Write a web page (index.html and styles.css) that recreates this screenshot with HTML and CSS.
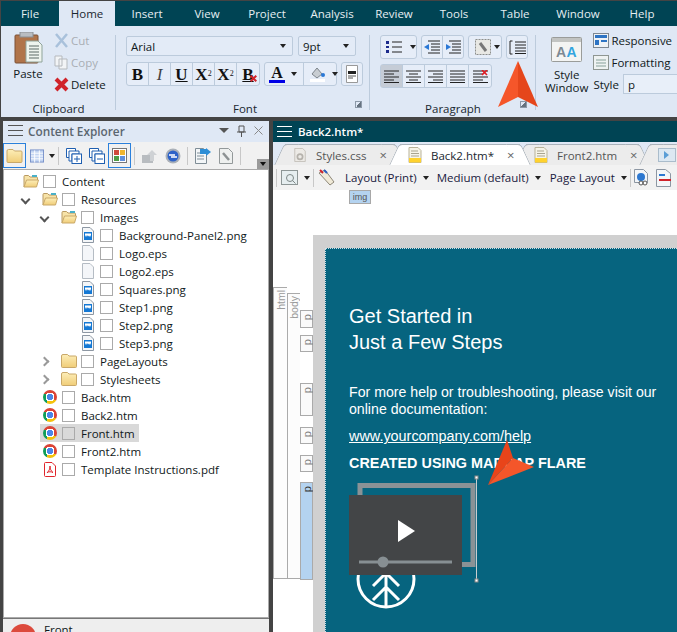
FILE: index.html
```html
<!DOCTYPE html>
<html lang="en">
<head>
<meta charset="utf-8">
<title>MadCap Flare</title>
<link rel="stylesheet" href="styles.css">
</head>
<body>
<svg class="defs" width="0" height="0">
  <defs>
    <linearGradient id="fold" x1="0" y1="0" x2="0" y2="1"><stop offset="0" stop-color="#fdeeb8"/><stop offset="1" stop-color="#f0cd78"/></linearGradient>
    <symbol id="folder" viewBox="0 0 16 14"><path d="M.5 3V12.500a1 1 0 0 0 1 1h13a1 1 0 0 0 1-1V3a1 1 0 0 0-1-1H8L6.500.5H2a1.500 1.500 0 0 0-1.500 1.500z" fill="url(#fold)" stroke="#c9a869"/></symbol>
    <symbol id="folderopen" viewBox="0 0 16 14"><path d="M1 13V2.500A1 1 0 0 1 2 1.500h3.500L7 3h6.500a1 1 0 0 1 1 1v2" fill="#f7e3a8" stroke="#b99a62"/><rect x="9" y="1" width="5" height="2" fill="#49b0c8"/><path d="M1 13l2.500-7h12L13.500 13z" fill="url(#fold)" stroke="#c9a869"/></symbol>
    <symbol id="imgfile" viewBox="0 0 12 16"><path d="M.5.500H8L11.500 4V15.500H.5z" fill="#f4f6f8" stroke="#8d97a3"/><rect x="2" y="5" width="8" height="8" fill="#1478d4"/><path d="M3 6.500h6v1.500l-1 2-1-1.500L6 9.500 5 8 4 10 3 8z" fill="#fff"/></symbol>
    <symbol id="blankfile" viewBox="0 0 12 16"><path d="M.5.500H8L11.500 4V15.500H.5z" fill="#f4f6f9" stroke="#b5bcc4"/></symbol>
    <symbol id="docy" viewBox="0 0 14 16"><path d="M1 .5H10L13 3.500V15.500H1z" fill="#f6f4e8" stroke="#b9b39a"/><path d="M3 4h7M3 6.500h8M3 9h8" stroke="#a9a48f"/><rect x="1" y="11" width="12" height="4.500" fill="#ffd22e"/></symbol>
  </defs>
</svg>
<div class="app">
  <nav class="menu">
    <span>File</span><span class="on">Home</span><span>Insert</span><span>View</span><span>Project</span><span>Analysis</span><span>Review</span><span>Tools</span><span>Table</span><span>Window</span><span>Help</span>
  </nav>

  <section class="ribbon">
    <div class="grp g-clip">
      <div class="grp-body clip">
        <div class="paste">
          <svg width="29" height="32" viewBox="0 0 29 32"><rect x="1" y="3" width="23" height="28" rx="1" fill="#b0744a" stroke="#7b5136"/><rect x="6" y="0" width="13" height="5" fill="#b9bdc2" stroke="#8b8f94"/><path d="M12 9h12l4 4v17H12z" fill="#eef4ee" stroke="#8fa39a"/><path d="M15 14h10M15 17h10M15 20h10M15 23h10M15 26h10" stroke="#5c6b66"/></svg>
          <span>Paste</span>
        </div>
        <div class="clip-list">
          <div class="cl dis"><svg width="15" height="15" viewBox="0 0 15 15"><path d="M2 1l11 13M13 1L2 14" stroke="#a9c1db" stroke-width="2.500"/></svg>Cut</div>
          <div class="cl dis"><svg width="15" height="15" viewBox="0 0 15 15"><path d="M1 1h7v10H1zM5 4h8v10H5z" fill="#f2f4f6" stroke="#b5b9bd"/></svg>Copy</div>
          <div class="cl"><svg width="15" height="15" viewBox="0 0 15 15"><path d="M2 2l11 11M13 2L2 13" stroke="#d0232a" stroke-width="4"/></svg>Delete</div>
        </div>
      </div>
      <div class="grp-label">Clipboard</div>
    </div>

    <div class="grp g-font">
      <div class="grp-body fontbody">
        <div class="frow r1">
          <div class="sel s-font">Arial<i class="caret"></i></div>
          <div class="sel s-size">9pt<i class="caret"></i></div>
        </div>
        <div class="frow r2">
          <div class="btns">
            <b class="b tb serif">B</b><b class="b serif it">I</b><b class="b serif un">U</b><b class="b tb serif">X<sup>2</sup></b><b class="b tb serif">X<sub>2</sub></b><b class="b tb serif un x">B</b>
          </div>
          <div class="btns colors">
            <span class="c-a"><b class="serif">A</b><i class="bar"></i></span><i class="caret"></i>
            <span class="c-b"><svg width="17" height="16" viewBox="0 0 17 16"><path d="M3 8l5-6 5 6-5 4z" fill="#c8cdd2" stroke="#7d858c"/><circle cx="14" cy="9" r="2" fill="#2a78d6"/><rect x="1" y="13" width="15" height="3" fill="#fff"/></svg></span><i class="caret"></i>
          </div>
          <div class="btns solo"><svg width="12" height="18" viewBox="0 0 12 18"><path d="M.5.500h11v17H.5z" fill="#fff" stroke="#999"/><rect x="2" y="6" width="8" height="3" fill="#222"/><path d="M2 11h8" stroke="#555"/><path d="M2 13h5" stroke="#555"/></svg></div>
        </div>
      </div>
      <div class="grp-label">Font<i class="launch"></i></div>
    </div>

    <div class="grp g-para">
      <div class="grp-body parabody">
        <div class="prow p1">
          <div class="btns pb list"><svg width="16" height="14" viewBox="0 0 16 14"><path d="M0 1h3v3H0zM0 6h3v2H0zM0 10h3v3H0z" fill="#1b2a8c"/><path d="M6 2h10M6 7h10M6 12h10" stroke="#222"/></svg><i class="caret"></i></div>
          <div class="btns pb indent"><span><svg width="16" height="14" viewBox="0 0 16 14"><path d="M4 1h12M7 4h9M7 7h9M7 10h9M4 13h12" stroke="#222"/><path d="M0 7l5-3v6z" fill="#2a78d6"/></svg></span><span><svg width="16" height="14" viewBox="0 0 16 14"><path d="M4 1h12M7 4h9M7 7h9M7 10h9M4 13h12" stroke="#222"/><path d="M6 7L1 4v6z" fill="#2a78d6"/></svg></span></div>
          <div class="btns pb tool"><svg width="16" height="16" viewBox="0 0 16 16"><rect x=".5" y=".5" width="15" height="15" fill="#e8e8e4" stroke="#8c8f8c" stroke-dasharray="2 1"/><path d="M5 4l6 8" stroke="#777" stroke-width="3"/></svg><i class="caret"></i></div>
          <div class="btns pb bracket"><svg width="17" height="15" viewBox="0 0 17 15"><path d="M3.500 1H1v13h2.500" fill="none" stroke="#222"/><path d="M6 2h11M6 5h11M6 8h11M6 11h11M6 13.500h11" stroke="#222"/></svg></div>
        </div>
        <div class="prow p2">
          <div class="btns align">
            <span class="act"><svg width="15" height="13" viewBox="0 0 15 13"><path d="M0 1h15M0 4h10M0 7h15M0 10h10M0 12.500h15" stroke="#222"/></svg></span>
            <span><svg width="15" height="13" viewBox="0 0 15 13"><path d="M0 1h15M3 4h9M0 7h15M3 10h9M0 12.500h15" stroke="#222"/></svg></span>
            <span><svg width="15" height="13" viewBox="0 0 15 13"><path d="M0 1h15M5 4h10M0 7h15M5 10h10M0 12.500h15" stroke="#222"/></svg></span>
            <span><svg width="15" height="13" viewBox="0 0 15 13"><path d="M0 1h15M0 4h15M0 7h15M0 10h15M0 12.500h15" stroke="#222"/></svg></span>
            <span><svg width="15" height="13" viewBox="0 0 15 13"><path d="M0 1h15M0 4h10M0 7h15M0 10h10M0 12.500h15" stroke="#222"/><path d="M9 0l5 5M14 0L9 5" stroke="#e01c24" stroke-width="1.600"/></svg></span>
          </div>
        </div>
      </div>
      <div class="grp-label">Paragraph<i class="launch"></i></div>
    </div>

    <div class="g-style">
      <div class="stylewin">
        <svg width="31" height="25" viewBox="0 0 31 25"><rect x=".5" y=".5" width="30" height="24" rx="1" fill="#f3f4f3" stroke="#9a9c9a"/><rect x="1" y="1" width="29" height="4" fill="#c2c4c2"/><text x="5" y="20" font-family="Liberation Sans, sans-serif" font-size="14" font-weight="700" fill="#7d8993">A</text><text x="15.500" y="20" font-family="Liberation Sans, sans-serif" font-size="14" font-weight="700" fill="#33a5df">A</text></svg>
        <span class="swl">Style</span>
        <span class="swl">Window</span>
      </div>
      <div class="stylelist">
        <div class="sl"><svg width="16" height="15" viewBox="0 0 16 15"><rect x=".5" y=".5" width="15" height="14" fill="#eef2f6" stroke="#7e8892"/><path d="M2 2h12v3H2zM2 7h4v5H2zM8 7h6v2H8z" fill="#2d74c4"/></svg>Responsive</div>
        <div class="sl"><svg width="16" height="15" viewBox="0 0 16 15"><rect x=".5" y=".5" width="15" height="14" fill="#eef2f2" stroke="#8e9692"/><path d="M3 5h10M3 8h10M3 11h10" stroke="#87a19a"/></svg>Formatting</div>
        <div class="sl st">Style<div class="stylebox">p</div></div>
      </div>
    </div>
  </section>

  <main class="work">
    <aside class="explorer">
      <header class="ph">
        <span class="ham"><i></i><i></i><i></i></span>
        <strong>Content Explorer</strong>
        <span class="ph-ctl">
          <i class="caret big"></i>
          <svg width="9" height="12" viewBox="0 0 9 12"><path d="M2 1h5v6H2zM0 7h9M4.500 7v5" fill="none" stroke="#555"/></svg>
          <svg width="9" height="9" viewBox="0 0 9 9"><path d="M.5.500l8 8M8.500.500l-8 8" stroke="#888"/></svg>
        </span>
      </header>
      <div class="ptools">
        <span class="pt selb"><svg width="17" height="14"><use href="#folder"/></svg></span>
        <span class="pt w-table"><svg width="15" height="14" viewBox="0 0 15 14"><rect x=".5" y=".5" width="14" height="13" fill="#c3d5f2" stroke="#7690c8"/><path d="M1 4h13M1 7h13M1 10h13M5 1v13M10 1v13" stroke="#fff"/></svg><i class="caret"></i></span>
        <i class="vsep"></i>
        <span class="pt w-c"><svg width="16" height="16" viewBox="0 0 16 16"><path d="M.5.500h9v3h-6v6h-3z" fill="#fff" stroke="#1f5fb0"/><path d="M3 3h10v3H6v7H3z" fill="#fff" stroke="#1f5fb0"/><rect x="6" y="6" width="9.500" height="9.500" fill="#fff" stroke="#1f5fb0"/><path d="M8 11h6M11 8v6" stroke="#1f5fb0"/></svg></span>
        <span class="pt w-c"><svg width="16" height="16" viewBox="0 0 16 16"><path d="M.5.500h9v3h-6v6h-3z" fill="#fff" stroke="#1f5fb0"/><path d="M3 3h10v3H6v7H3z" fill="#fff" stroke="#1f5fb0"/><rect x="6" y="6" width="9.500" height="9.500" fill="#fff" stroke="#1f5fb0"/><path d="M8 11h6" stroke="#1f5fb0"/></svg></span>
        <span class="pt selb"><svg width="15" height="15" viewBox="0 0 15 15"><rect x=".5" y=".5" width="14" height="14" fill="#fff" stroke="#777"/><rect x="2" y="2" width="5" height="5" fill="#d04a3c"/><rect x="8" y="2" width="5" height="5" fill="#f0b52e"/><rect x="2" y="8" width="5" height="5" fill="#4f9d46"/><rect x="8" y="8" width="5" height="5" fill="#5f8fdc"/></svg></span>
        <i class="vsep"></i>
        <span class="pt w-c"><svg width="16" height="14" viewBox="0 0 16 14"><path d="M0 6h11v8H0z" fill="#b8bcc0"/><path d="M10 1l5 5h-3v6H8V6H5z" fill="#cfd2d5"/></svg></span>
        <span class="pt w-c"><svg width="16" height="16" viewBox="0 0 16 16"><circle cx="8" cy="8" r="7.500" fill="#aab0b8"/><circle cx="8" cy="8" r="5.500" fill="#2d62c8"/><path d="M4 7h6M12 9H6" stroke="#fff" stroke-width="1.500"/></svg></span>
        <i class="vsep"></i>
        <span class="pt w-c"><svg width="16" height="16" viewBox="0 0 16 16"><path d="M.5.500h8l3 3v12H.5z" fill="#f3f6f8" stroke="#7f8d96"/><path d="M2 5h7M2 8h7M2 11h7" stroke="#7f8d96"/><path d="M5 1h6V0l5 4-5 4V6H5z" fill="#2d8ed6"/></svg></span>
        <span class="pt w-c"><svg width="14" height="16" viewBox="0 0 14 16"><path d="M.5.500h9l4 4v11H.5z" fill="#eef0ef" stroke="#93999a"/><path d="M4 5l6 7" stroke="#8c9192" stroke-width="2.500"/></svg></span>
        <i class="vsep"></i>
        <span class="overflow"><i></i></span>
      </div>
      <div class="tree">
        <div class="row l0"><svg class="ic" width="16" height="14"><use href="#folderopen"/></svg><i class="cb"></i><span>Content</span></div>
        <div class="row l1"><i class="chev down"></i><svg class="ic" width="16" height="14"><use href="#folderopen"/></svg><i class="cb"></i><span>Resources</span></div>
        <div class="row l2"><i class="chev down"></i><svg class="ic" width="16" height="14"><use href="#folderopen"/></svg><i class="cb"></i><span>Images</span></div>
        <div class="row l3"><svg class="ic" width="12" height="16"><use href="#imgfile"/></svg><i class="cb"></i><span>Background-Panel2.png</span></div>
        <div class="row l3"><svg class="ic" width="12" height="16"><use href="#blankfile"/></svg><i class="cb"></i><span>Logo.eps</span></div>
        <div class="row l3"><svg class="ic" width="12" height="16"><use href="#blankfile"/></svg><i class="cb"></i><span>Logo2.eps</span></div>
        <div class="row l3"><svg class="ic" width="12" height="16"><use href="#imgfile"/></svg><i class="cb"></i><span>Squares.png</span></div>
        <div class="row l3"><svg class="ic" width="12" height="16"><use href="#imgfile"/></svg><i class="cb"></i><span>Step1.png</span></div>
        <div class="row l3"><svg class="ic" width="12" height="16"><use href="#imgfile"/></svg><i class="cb"></i><span>Step2.png</span></div>
        <div class="row l3"><svg class="ic" width="12" height="16"><use href="#imgfile"/></svg><i class="cb"></i><span>Step3.png</span></div>
        <div class="row l2"><i class="chev"></i><svg class="ic" width="16" height="14"><use href="#folder"/></svg><i class="cb"></i><span>PageLayouts</span></div>
        <div class="row l2"><i class="chev"></i><svg class="ic" width="16" height="14"><use href="#folder"/></svg><i class="cb"></i><span>Stylesheets</span></div>
        <div class="row l1"><i class="chrome ic"></i><i class="cb"></i><span>Back.htm</span></div>
        <div class="row l1"><i class="chrome ic"></i><i class="cb"></i><span>Back2.htm</span></div>
        <div class="row l1 sel-row"><i class="chrome ic"></i><i class="cb"></i><span>Front.htm</span></div>
        <div class="row l1"><i class="chrome ic"></i><i class="cb"></i><span>Front2.htm</span></div>
        <div class="row l1"><svg class="ic" width="16" height="15" viewBox="0 0 14 15"><path d="M1.500 1.500a1 1 0 0 1 1-1H9L12.500 4v9.500a1 1 0 0 1-1 1h-9a1 1 0 0 1-1-1z" fill="#fff" stroke="#e0242a"/><path d="M7 4c0 3-1 5-3 7m3-7c0 3 1 5 3 6.500M4 10.500c2-1 4-1 6 0" fill="none" stroke="#e0242a"/></svg><i class="cb"></i><span>Template Instructions.pdf</span></div>
      </div>
      <footer class="pfoot"><i class="avatar"></i><span>Front</span></footer>
    </aside>

    <section class="doc">
      <header class="dh"><span class="ham wh"><i></i><i></i><i></i></span><strong>Back2.htm*</strong></header>
      <div class="tabs">
        <div class="tab t1"><svg width="14" height="14" viewBox="0 0 14 16"><path d="M1 .5H10L13 3.500V15.500H1z" fill="#eceae6" stroke="#c0bdb6"/><circle cx="7" cy="10" r="3" fill="none" stroke="#b5b2ac" stroke-width="2"/></svg><span>Styles.css</span><em>×</em></div>
        <div class="tab active"><svg width="14" height="16"><use href="#docy"/></svg><span>Back2.htm*</span><em>×</em></div>
        <div class="tab t3"><svg width="14" height="16"><use href="#docy"/></svg><span>Front2.htm</span><em>×</em></div>
        <div class="tab t4"><svg width="18" height="14" viewBox="0 0 18 14"><rect x=".5" y=".5" width="17" height="13" fill="#dce8f2" stroke="#aabccb"/><path d="M6 3l5 4-5 4z" fill="#5a9ed6"/></svg></div>
      </div>
      <div class="dtools">
        <i class="vsep"></i>
        <svg class="dprev" width="17" height="15" viewBox="0 0 17 15"><rect x=".5" y=".5" width="16" height="14" fill="#e6eef0" stroke="#8d9696"/><circle cx="9" cy="8" r="3.500" fill="none" stroke="#7d8787"/><path d="M11.500 10.500l3 3" stroke="#7d8787"/></svg>
        <i class="caret"></i>
        <i class="vsep"></i>
        <svg width="18" height="17" viewBox="0 0 18 17"><path d="M2 4l6-3 9 12-4 3z" fill="#f0ead8" stroke="#8d8778"/><path d="M3 1l3 3" stroke="#d0232a" stroke-width="2"/><path d="M7 1l3 3" stroke="#2a5fc0" stroke-width="2"/></svg>
        <span class="dt d1">Layout (Print)</span><i class="caret"></i>
        <span class="dt d2">Medium (default)</span><i class="caret"></i>
        <span class="dt d3">Page Layout</span><i class="caret"></i>
        <i class="vsep"></i>
        <svg width="15" height="18" viewBox="0 0 15 18"><path d="M.5.500h9l4 4v9H.5z" fill="#f4f6f8" stroke="#8d97a3"/><circle cx="7" cy="8" r="4" fill="#2d78d0"/><path d="M5 14a2 2 0 1 1 4 0 2 2 0 1 1-4 0zm4 0a2 2 0 1 1 4 0 2 2 0 1 1-4 0z" fill="#fff" stroke="#555"/></svg>
        <svg width="15" height="18" viewBox="0 0 15 18"><path d="M.5.500h9l5 4v13H.5z" fill="#f4f6f8" stroke="#8d97a3"/><path d="M3 6h6" stroke="#2d78d0" stroke-width="2"/><path d="M3 11h12" stroke="#d0232a" stroke-width="2"/></svg>
      </div>
      <div class="canvas">
        <div class="tagrow"><span class="imgtag">img</span></div>
        <div class="stage">
          <div class="struct">
            <div class="col c-html"><span>html</span></div>
            <div class="col c-body"><span>body</span></div>
            <div class="pcol">
              <div class="pc h1"><span>p</span></div>
              <div class="pc h2"><span>p</span></div>
              <div class="pc h3"><span>p</span></div>
              <div class="pc h4"><span>p</span></div>
              <div class="pc h5"><span>p</span></div>
              <div class="pc h6"><span>p</span></div>
            </div>
          </div>
          <div class="gutter">
            <article class="page">
              <h1>Get Started in<br>Just a Few Steps</h1>
              <p class="help">For more help or troubleshooting, please visit our online documentation:</p>
              <p class="link">www.yourcompany.com/help</p>
              <p class="created">CREATED USING MADCAP FLARE</p>
              <div class="media">
                <svg width="150" height="135" viewBox="0 0 150 135">
                  <circle cx="38" cy="102" r="28" fill="none" stroke="#fff" stroke-width="3"/>
                  <path d="M38 131V90M25 109l13-13 13 13M25 123l13-13 13 13" fill="none" stroke="#fff" stroke-width="3"/>
                  <path d="M12 18V8.500H125V87.500H112" fill="none" stroke="#8a9296" stroke-width="5"/>
                  <rect x="1" y="18" width="113" height="80" fill="#434547"/>
                  <path d="M50 43L67 54 50 65z" fill="#fff"/>
                  <path d="M11 85h93" stroke="#878f93" stroke-width="3"/>
                  <circle cx="35" cy="85" r="5.500" fill="#878f93"/>
                  <path d="M128.500 0V104" stroke="#c9ced1"/>
                  <rect x="127" y="-1" width="3" height="3" fill="#fff" stroke="#888"/>
                  <rect x="127" y="102" width="3" height="3" fill="#fff" stroke="#888"/>
                </svg>
              </div>
            </article>
          </div>
        </div>
      </div>
    </section>
  </main>

  <svg class="arrow a1" width="42" height="50" viewBox="0 0 42 50"><path d="M21 1L1 47 21 37z" fill="#f5562a"/><path d="M21 1L41 47 21 37z" fill="#e5461b"/></svg>
  <svg class="arrow a2" width="48" height="46" viewBox="0 0 48 46"><path d="M20 0L1 45 26 18z" fill="#e8441a"/><path d="M26 18L47 27 1 45z" fill="#f4562a"/></svg>
</div>
</body>
</html>
```
FILE: styles.css
```css
* { box-sizing: border-box; }
html, body { margin: 0; padding: 0; }
body {
  width: 677px;
  height: 632px;
  overflow: hidden;
  background: #444;
  font-family: "Open Sans", "Noto Sans", sans-serif;
  font-size: 11.5px;
  color: #101820;
}
i, em { font-style: normal; }
.defs { position: absolute; }
.app { position: relative; width: 677px; height: 632px; overflow: hidden; padding: 1px 0 0 1px; }

.menu {
  display: grid;
  grid-template-columns: 58px 56px 64px 56px 64px 66px 58px 62px 60px 66px 62px;
  height: 25px;
  background: #004454;
  color: #e6eef2;
}
.menu span { display: flex; align-items: center; justify-content: center; }
.menu .on { background: #dfe8f5; color: #1a2730; }

.ribbon {
  display: flex;
  height: 91px;
  background: #dfe8f5;
  overflow: hidden;
}
.grp { display: flex; flex-direction: column; position: relative; }
.grp::after {
  content: "";
  position: absolute;
  right: 0; top: 9px; bottom: 7px;
  width: 1px;
  background: #bccbdc;
}
.grp-body { height: 74px; }
.grp-label { height: 17px; text-align: center; line-height: 17px; color: #1a2730; position: relative; }
.g-clip { width: 115px; }
.g-font { width: 254px; }
.g-font .grp-label { padding-left: 4px; }
.g-para { width: 166px; }
.clip { display: flex; padding: 6px 0 0 10px; }
.paste { display: flex; flex-direction: column; align-items: center; width: 34px; }
.paste span { margin-top: 2px; }
.clip-list { display: flex; flex-direction: column; margin: -3px 0 0 9px; }
.cl { display: flex; align-items: center; gap: 2px; height: 22px; }
.cl.dis { color: #a9aeb4; }
.launch {
  position: absolute;
  right: 9px; top: 1px;
  width: 7px; height: 7px;
  border: 1px solid #8c99a8;
  background: linear-gradient(135deg, transparent 50%, #66727f 50%);
}
.g-font .launch { right: 8px; }

.caret {
  display: inline-block;
  width: 0; height: 0;
  border: 3px solid transparent;
  border-top: 4px solid #222;
  border-bottom: 0;
}
.caret.big { border-width: 5px 5px 0; border-top-color: #555; }

.fontbody { padding: 10px 0 0 10px; }
.frow { display: flex; }
.r1 { gap: 5px; }
.sel {
  height: 20px;
  background: #e3ebf7;
  border: 1px solid #bccbdc;
  border-radius: 2px;
  display: flex;
  align-items: center;
  justify-content: space-between;
  padding: 0 6px 0 4px;
}
.s-font { width: 167px; }
.s-size { width: 58px; }
.r2 { margin-top: 6px; gap: 4px; }
.btns {
  display: flex;
  align-items: center;
  height: 24px;
  border: 1px solid #bccbdc;
  border-radius: 3px;
  background: #e6edf8;
}
.b {
  width: 22px;
  height: 100%;
  display: flex;
  align-items: center;
  justify-content: center;
  border-right: 1px solid #bccbdc;
  font-size: 17px;
  line-height: 1;
  position: relative;
  color: #111;
}
.b:last-child { border-right: 0; }
.b sup, .b sub { font-size: 8px; line-height: 0; font-weight: 400; }
.serif { font-family: "Liberation Serif", serif; }
.it { font-style: italic; font-weight: 400; color: #444; }
.un { text-decoration: underline; }
.x::after {
  content: "";
  position: absolute;
  right: 2px; bottom: 3px;
  width: 7px; height: 7px;
  background: #d0232a;
  clip-path: polygon(0 20%,20% 0,50% 30%,80% 0,100% 20%,70% 50%,100% 80%,80% 100%,50% 70%,20% 100%,0 80%,30% 50%);
}
.colors { width: 73px; padding-left: 4px; }
.c-a { width: 16px; display: flex; flex-direction: column; align-items: center; font-size: 16px; line-height: 14px; }
.c-a b { color: #111; }
.bar { width: 16px; height: 3px; background: #0000e6; display: block; }
.colors .caret { margin-left: 6px; }
.c-b { margin-left: 6px; padding-left: 5px; border-left: 1px solid #bccbdc; height: 22px; display: flex; align-items: center; }
.solo { width: 22px; justify-content: center; margin-left: 0; }

.parabody { padding: 9px 0 0 10px; }
.prow { display: flex; }
.p1 { gap: 4px; }
.pb { height: 24px; }
.list { width: 37px; padding-left: 5px; gap: 8px; }
.indent { width: 43px; }
.indent span { width: 21px; display: flex; justify-content: center; }
.indent span + span { border-left: 1px solid #bccbdc; height: 100%; align-items: center; }
.tool { width: 34px; padding-left: 6px; gap: 3px; }
.bracket { width: 22px; justify-content: center; }
.p2 { margin-top: 5px; }
.align span {
  width: 22px;
  height: 100%;
  display: flex;
  align-items: center;
  justify-content: center;
  border-right: 1px solid #bccbdc;
}
.align span:last-child { border-right: 0; }
.align .act { background: #c5ccd6; }

.g-style { display: flex; padding: 3px 0 0 9px; flex: 1; min-width: 0; }
.stylewin { width: 50px; display: flex; flex-direction: column; align-items: center; text-align: center; padding-top: 8px; }
.stylewin svg { margin-bottom: 6px; }
.swl { display: block; height: 13px; line-height: 13px; }
.stylelist { margin-left: 5px; display: flex; flex-direction: column; }
.sl { display: flex; align-items: center; gap: 2px; height: 22px; white-space: nowrap; }
.st { gap: 4px; }
.stylebox { width: 60px; height: 20px; background: #e8eff9; border: 1px solid #bccbdc; padding-left: 4px; line-height: 20px; }

.work { display: flex; gap: 4px; height: 511px; margin-top: 4px; }
.explorer { width: 266px; margin-left: 2px; display: flex; flex-direction: column; background: #f2f2f2; }
.ph { display: flex; align-items: center; height: 21px; background: #dfe8f5; padding: 0 6px 2px 5px; }
.ham { display: inline-flex; flex-direction: column; gap: 4px; width: 15px; }
.ham i { height: 1px; background: #555; display: block; }
.ham.wh i { background: #fff; }
.ph strong { margin-left: 5px; color: #5b6670; font-weight: 600; font-size: 11.8px; flex: 1; }
.ph-ctl { display: flex; align-items: center; gap: 8px; }
.ptools { display: flex; align-items: center; height: 27px; position: relative; background: #f1f1f1; }
.pt { display: flex; align-items: center; justify-content: center; height: 25px; }
.selb { width: 23px; border: 1px solid #2a80dc; }
.w-table { width: 29px; gap: 5px; padding-left: 4px; }
.w-c { width: 23px; }
.vsep { width: 1px; height: 18px; background: #c8c8c8; display: inline-block; margin: 0 3px; flex: none; }
.overflow {
  position: absolute;
  right: 0; bottom: 0;
  width: 12px; height: 10px;
  background: #9a9a9a;
  display: flex;
  align-items: center;
  justify-content: center;
}
.overflow i { border: 3px solid transparent; border-top: 4px solid #111; border-bottom: 0; }
.tree { flex: 1; background: #fff; border: 1px solid #aaa; padding-top: 2px; }
.row { display: flex; align-items: center; height: 18px; white-space: nowrap; }
.ic { flex: none; }
.l0 { padding-left: 19px; }
.l1 { padding-left: 38px; }
.l2 { padding-left: 57px; }
.l3 { padding-left: 76px; }
.l3 .ic { margin-left: 2px; margin-right: 2px; }
.cb { width: 13px; height: 13px; border: 1px solid #aaa; margin: 0 6px 0 4px; flex: none; }
.chev {
  width: 7px; height: 7px;
  margin-left: -20px;
  margin-right: 13px;
  border: solid #999;
  border-width: 2px 2px 0 0;
  transform: rotate(45deg);
  flex: none;
}
.chev.down { border-color: #555; transform: rotate(135deg); }
.chrome {
  width: 14px; height: 14px;
  margin: 0 1px;
  border-radius: 50%;
  background:
    radial-gradient(circle, #4a86e8 0 3px, #fff 3px 4.500px, transparent 4.500px),
    conic-gradient(#db4437 0 120deg, #f4c20d 120deg 210deg, #0f9d58 210deg 300deg, #db4437 300deg);
}
.l1.sel-row { margin-left: 36px; padding-left: 2px; width: 99px; background: #d9d9d9; }
.sel-row .cb { background: #d9d9d9; }
.pfoot {
  height: 14px;
  background: #eee;
  overflow: hidden;
  position: relative;
  padding-left: 41px;
  line-height: 22px;
  border-top: 1px solid #777;
}
.avatar { position: absolute; left: 7px; top: 5px; width: 26px; height: 26px; border-radius: 50%; background: #dc4a3c; }

.doc { flex: 1; min-width: 0; display: flex; flex-direction: column; background: #fff; }
.dh { height: 21px; background: #004454; display: flex; align-items: center; padding-left: 4px; color: #fff; gap: 6px; }
.dh strong { font-weight: 600; }
.tabs { display: flex; height: 23px; background: #dfe8f5; padding-left: 12px; align-items: flex-end; overflow: hidden; }
.tab {
  position: relative;
  height: 21px;
  display: flex;
  align-items: center;
  gap: 9px;
  color: #555;
  padding-left: 8px;
  background: #ececec;
  border-top: 1px solid #aab2ba;
  flex: none;
}
.tab::before, .tab::after {
  content: "";
  position: absolute;
  top: -1px; bottom: 0;
  width: 14px;
  background: inherit;
  border-top: 1px solid #aab2ba;
  z-index: 0;
}
.tab::before { left: -6px; transform: skewX(-25deg); border-left: 1px solid #aab2ba; border-radius: 4px 0 0 0; }
.tab::after { right: -6px; transform: skewX(25deg); border-right: 1px solid #aab2ba; border-radius: 0 4px 0 0; }
.tab > * { position: relative; z-index: 1; }
.tab em { font-size: 13px; color: #666; margin-left: 4px; }
.t1 { width: 110px; }
.active { width: 120px; margin-left: 5px; background: #fff; color: #1a2730; z-index: 2; }
.t3 { width: 113px; margin-left: 6px; }
.t4 { width: 40px; margin-left: 11px; }

.dtools { height: 25px; background: #f2f2f2; display: flex; align-items: center; white-space: nowrap; overflow: hidden; }
.dtools .vsep { margin: 0 3px; }
.dtools .caret { margin-left: 6px; flex: none; }
.dprev { margin-left: 1px; }
.dt { color: #1a1a40; }
.d1 { margin-left: 10px; }
.d2 { margin-left: 8px; }
.d3 { margin-left: 9px; }
.dtools > svg { flex: none; }
.dtools > svg:last-child { margin-left: 7px; }

.canvas { flex: 1; display: flex; flex-direction: column; background: #fff; min-height: 0; }
.tagrow { height: 45px; padding-left: 76px; }
.imgtag {
  display: block;
  width: 22px; height: 14px;
  background: #b4d3f0;
  border: 1px solid #a8a8a8;
  font-family: "Liberation Sans", sans-serif;
  font-size: 9px;
  line-height: 12px;
  text-align: center;
  color: #555;
}
.stage { flex: 1; display: flex; min-height: 0; }
.struct { width: 40px; display: flex; padding-top: 52px; flex: none; height: 344px; }
.col { width: 14px; border: 1px solid #aaa; border-right: 0; position: relative; background: #fcfcfc; }
.c-body { width: 13px; margin-top: 6px; }
.col span, .pc span {
  position: absolute;
  left: 0; right: 0; top: 2px;
  writing-mode: vertical-rl;
  transform: rotate(180deg);
  display: flex;
  align-items: center;
  font-family: "Liberation Sans", sans-serif;
  font-size: 10.5px;
  line-height: 12px;
  color: #9a9a9a;
}
.pc span { top: 3px; color: #808080; font-size: 11px; }
.pcol { width: 13px; margin-top: 23px; display: flex; flex-direction: column; }
.pc { position: relative; border: 1px solid #aaa; background: #fafafa; flex: none; }
.h1 { height: 18px; }
.h2 { height: 17px; margin-top: 7px; }
.h3 { height: 33px; margin-top: 31px; }
.h4 { height: 17px; margin-top: 11px; }
.h5 { height: 17px; margin-top: 11px; }
.h6 { height: 98px; margin-top: 10px; background: #b4d3f0; }
.h6 span { color: #333; }
.gutter { flex: 1; background: #d0d0d0; padding: 13px 0 0 12px; overflow: hidden; }
.page {
  height: 100%;
  background: #06647f;
  border-left: 1px dotted #cfe0e6;
  border-top: 1px dotted #cfe0e6;
  padding: 54px 0 0 23px;
  color: #fff;
  font-family: "Liberation Sans", sans-serif;
  overflow: hidden;
}
.page h1 { margin: 0; font-weight: 400; font-size: 20px; line-height: 26px; }
.help { margin: 29px 0 0; font-size: 14.15px; line-height: 17px; width: 320px; }
.link { margin: 10px 0 0; font-size: 14.4px; line-height: 17px; text-decoration: underline; }
.created { margin: 10px 0 0; font-size: 14.4px; line-height: 16px; font-weight: 700; }
.media { margin-top: 6px; margin-left: -1px; height: 135px; }
.media svg { overflow: visible; display: block; }

.arrow { position: absolute; }
.a1 { left: 497px; top: 60px; }
.a2 { left: 487px; top: 440px; }
```
